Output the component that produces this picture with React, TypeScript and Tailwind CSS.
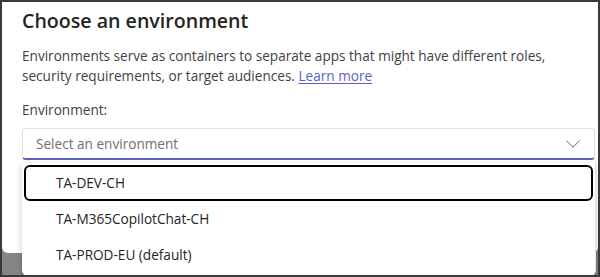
import { ChevronDown } from "lucide-react";

const options = ["TA-DEV-CH", "TA-M365CopilotChat-CH", "TA-PROD-EU (default)"];

export default function App() {
  return (
    <div
      className="relative h-[277px] w-[600px] overflow-hidden border-2 border-[#3a3a3a] bg-[#858585]"
      style={{ fontFamily: '"Open Sans", "Noto Sans", sans-serif' }}
    >
      {/* dialog */}
      <div className="h-[251px] rounded-b-[6px] bg-white pl-[20px] pr-[3px] pt-[5px]">
        <h2 className="text-[19.6px] font-semibold leading-[28px] text-[#242424]">
          Choose an environment
        </h2>
        <p className="mt-[11px] text-[13.6px] leading-[20px] text-[#424242]">
          Environments serve as containers to separate apps that might have different roles,
          <br />
          security requirements, or target audiences.{" "}
          <a href="#" className="text-[#5b5fc7] underline underline-offset-2">
            Learn more
          </a>
        </p>
        <div className="mt-[14px] text-[13.6px] leading-[20px] text-[#424242]">Environment:</div>
        <div className="mt-[8px] flex h-[32px] items-center justify-between rounded-[4px] border border-[#e0e0e0] border-b-2 border-b-[#5b5fc7] pl-[13px] pr-[8px]">
          <span className="pt-[1px] text-[13.6px] text-[#707070]">Select an environment</span>
          <ChevronDown className="h-[26px] w-[26px] text-[#616161]" strokeWidth={0.9} />
        </div>
      </div>

      {/* listbox popup */}
      <div className="absolute left-[20px] top-[161px] h-[113px] w-[574px] rounded-b-[6px] border-r border-[#e6e6e6] bg-white px-[2px] pt-[2px] shadow-[0_2px_6px_rgba(0,0,0,0.2)]">
        {options.map((o, i) => (
          <div
            key={o}
            className={
              "flex h-[36px] items-center rounded-[6px] pl-[30px] text-[13.6px] text-[#242424] " +
              (i === 0 ? "border-2 border-black" : "border-2 border-transparent")
            }
          >
            {o}
          </div>
        ))}
      </div>
    </div>
  );
}
